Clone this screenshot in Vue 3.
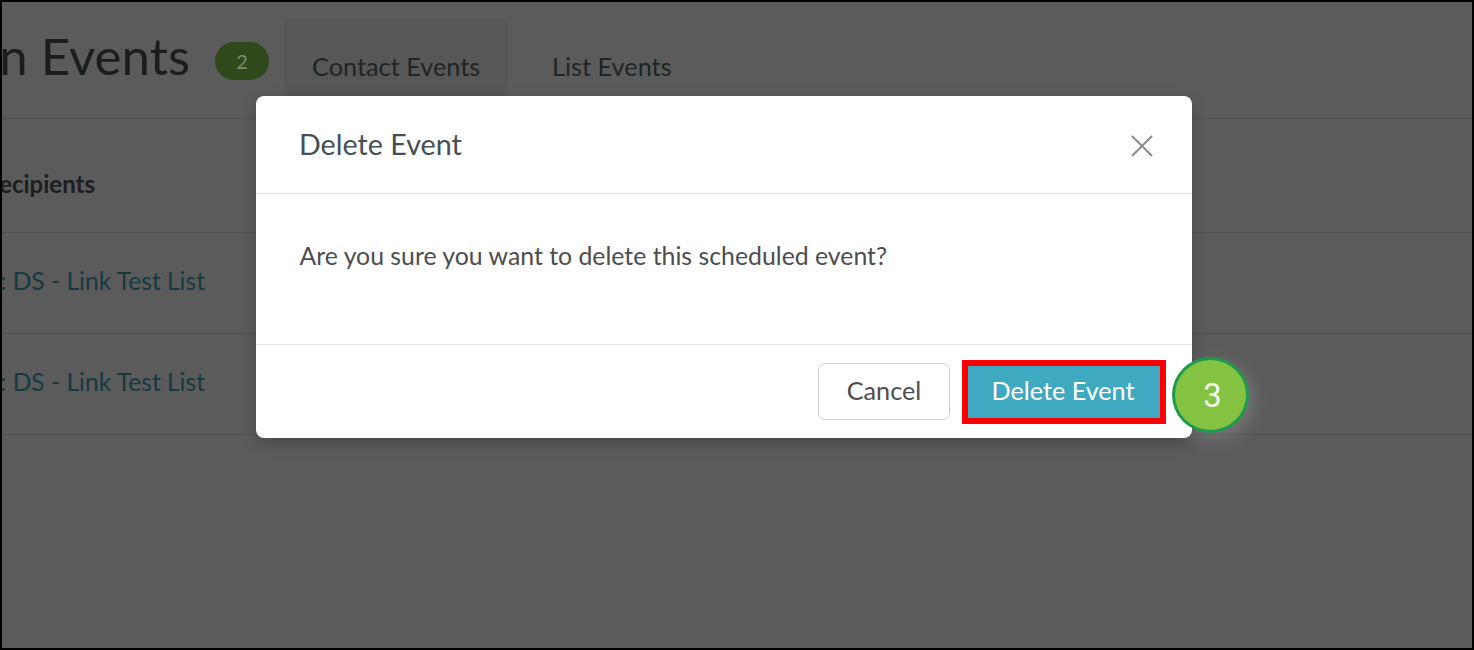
<script setup>
const rows = ['List: DS - Link Test List', 'List: DS - Link Test List']
</script>

<template>
  <div class="frame">
    <header class="top">
      <div class="title-clip">
        <h1 class="title">Automation Events</h1>
      </div>
      <span class="count">2</span>
      <nav class="tabs">
        <a class="tab active">Contact Events</a>
        <a class="tab">List Events</a>
      </nav>
    </header>
    <section class="table">
      <div class="cell head"><span class="clip"><b>Recipients</b></span></div>
      <div v-for="(row, i) in rows" :key="i" class="cell">
        <span class="clip link">{{ row }}</span>
      </div>
    </section>

    <div class="modal" role="dialog">
      <div class="modal-head">
        <h2 class="modal-title">Delete Event</h2>
        <svg class="close" width="24" height="24" viewBox="0 0 24 24" aria-label="Close">
          <path d="M2 2 L22 22 M22 2 L2 22" fill="none" stroke="#8b8b8b" stroke-width="2" />
        </svg>
      </div>
      <div class="modal-body">Are you sure you want to delete this scheduled event?</div>
      <div class="modal-foot">
        <button class="btn cancel">Cancel</button>
        <button class="btn danger">Delete Event</button>
      </div>
    </div>

    <div class="marker">3</div>
  </div>
</template>

<style>
html, body { margin: 0; padding: 0; background: #000; }
</style>

<style scoped>
.frame {
  position: relative;
  box-sizing: border-box;
  width: 1474px;
  height: 650px;
  border: 2px solid #000;
  background: #5b5b5b;
  overflow: hidden;
  font-family: Lato, "Liberation Sans", sans-serif;
}
.top {
  display: flex;
  align-items: flex-start;
  height: 116px;
  border-bottom: 1px solid #4f4f4f;
  box-sizing: content-box;
}
.title-clip {
  width: 188px;
  height: 116px;
  overflow: hidden;
  display: flex;
  justify-content: flex-end;
  flex: none;
}
.title {
  margin: 24px 0 0;
  font-size: 51px;
  line-height: 60px;
  font-weight: 400;
  color: #1b1e1f;
  white-space: nowrap;
}
.count {
  margin: 40px 0 0 25px;
  width: 54px;
  height: 38px;
  flex: none;
  border-radius: 19px;
  background: #30491a;
  color: #7d8a72;
  font-size: 20px;
  line-height: 38px;
  text-align: center;
}
.tabs {
  display: flex;
  margin: 17px 0 0 15px;
}
.tab {
  box-sizing: border-box;
  height: 99px;
  padding: 30px 0 0 28px;
  font-size: 25.3px;
  line-height: 34px;
  color: #212425;
  white-space: nowrap;
  border-radius: 8px 8px 0 0;
}
.tab.active {
  width: 224px;
  background: #575757;
}
.tab:last-child {
  padding-left: 44px;
}
.cell {
  height: 94px;
  padding-bottom: 6px;
  border-bottom: 1px solid #4f4f4f;
  display: flex;
  align-items: center;
  font-size: 24.6px;
}
.cell.head {
  height: 114px;
  font-size: 24px;
  padding-top: 16px;
  padding-bottom: 0;
  box-sizing: border-box;
}
.clip {
  width: 203px;
  overflow: hidden;
  display: flex;
  justify-content: flex-end;
  white-space: nowrap;
}
.cell.head .clip {
  width: 93px;
  color: #1c1e1f;
}
.link {
  color: #143a3f;
}
.modal {
  position: absolute;
  left: 254px;
  top: 94px;
  width: 936px;
  height: 342px;
  background: #fff;
  border-radius: 8px;
  box-shadow: 0 5px 15px rgba(0, 0, 0, 0.2);
  display: flex;
  flex-direction: column;
}
.modal-head {
  height: 98px;
  flex: none;
  box-sizing: border-box;
  border-bottom: 1px solid #e5e5e5;
  display: flex;
  align-items: center;
  justify-content: space-between;
  padding: 0 38px 0 43px;
}
.modal-title {
  margin: 0 0 1px;
  font-size: 28.7px;
  font-weight: 400;
  color: #465052;
}
.close {
  flex: none;
  margin-top: 2px;
}
.modal-body {
  height: 151px;
  flex: none;
  box-sizing: border-box;
  border-bottom: 1px solid #e5e5e5;
  padding: 43px 43.5px 0;
  font-size: 24.83px;
  line-height: 36px;
  color: #4d4d4d;
}
.modal-foot {
  flex: 1;
  display: flex;
  justify-content: flex-end;
  align-items: center;
  gap: 12px;
  padding: 1px 26px 0 0;
}
.btn {
  font-family: inherit;
  font-size: 25.2px;
  cursor: pointer;
  padding: 0 0 3px;
}
.cancel {
  width: 132px;
  height: 57px;
  margin-bottom: 2px;
  background: #fff;
  border: 1px solid #cccccc;
  border-radius: 7px;
  color: #4d4d4d;
}
.danger {
  width: 204px;
  height: 64px;
  padding: 0 2px 5px 0;
  background: #3fa9c1;
  border: 6px solid #ff0000;
  color: #fff;
}
.marker {
  position: absolute;
  left: 1170px;
  top: 355px;
  width: 77px;
  height: 76px;
  box-sizing: border-box;
  border: 3px solid #1f9a4c;
  border-radius: 50%;
  background: #84c341;
  color: #f4f8ec;
  font-family: Roboto, "Liberation Sans", sans-serif;
  font-weight: 400;
  font-size: 33px;
  line-height: 72px;
  text-align: center;
  padding-left: 4px;
  box-shadow: 4px 6px 18px rgba(255, 255, 255, 0.18);
}
</style>
